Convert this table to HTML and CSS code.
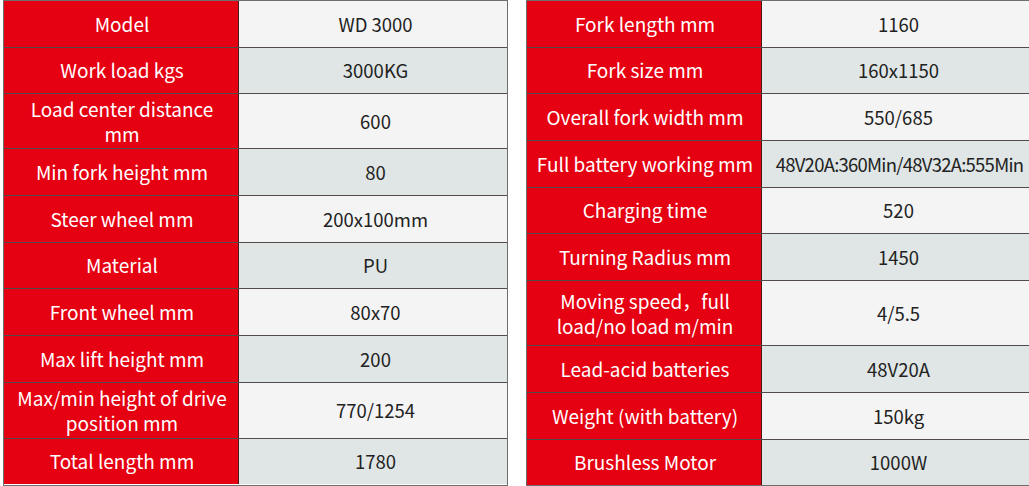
FILE: index.html
```html
<!DOCTYPE html>
<html lang="en">
<head>
<meta charset="utf-8">
<title>WD 3000 Specifications</title>
<link rel="stylesheet" href="styles.css">
</head>
<body>
<div class="page">
  <div class="spec">
    <div class="row"><div class="key">Model</div><div class="val">WD 3000</div></div>
    <div class="row alt"><div class="key">Work load kgs</div><div class="val">3000KG</div></div>
    <div class="row tall"><div class="key">Load center distance<br>mm</div><div class="val">600</div></div>
    <div class="row alt"><div class="key">Min fork height mm</div><div class="val">80</div></div>
    <div class="row"><div class="key">Steer wheel mm</div><div class="val">200x100mm</div></div>
    <div class="row alt"><div class="key">Material</div><div class="val">PU</div></div>
    <div class="row"><div class="key">Front wheel mm</div><div class="val">80x70</div></div>
    <div class="row alt"><div class="key">Max lift height mm</div><div class="val">200</div></div>
    <div class="row tall2"><div class="key">Max/min height of drive<br>position mm</div><div class="val">770/1254</div></div>
    <div class="row alt last"><div class="key">Total length mm</div><div class="val">1780</div></div>
  </div>
  <div class="spec">
    <div class="row"><div class="key">Fork length mm</div><div class="val">1160</div></div>
    <div class="row alt"><div class="key">Fork size mm</div><div class="val">160x1150</div></div>
    <div class="row"><div class="key">Overall fork width mm</div><div class="val">550/685</div></div>
    <div class="row alt"><div class="key">Full battery working mm</div><div class="val fit">48V20A:360Min/48V32A:555Min</div></div>
    <div class="row"><div class="key">Charging time</div><div class="val">520</div></div>
    <div class="row alt"><div class="key">Turning Radius mm</div><div class="val">1450</div></div>
    <div class="row xtall"><div class="key">Moving speed，full<br>load/no load m/min</div><div class="val">4/5.5</div></div>
    <div class="row alt"><div class="key">Lead-acid batteries</div><div class="val">48V20A</div></div>
    <div class="row"><div class="key">Weight (with battery)</div><div class="val">150kg</div></div>
    <div class="row alt last"><div class="key">Brushless Motor</div><div class="val">1000W</div></div>
  </div>
</div>
</body>
</html>
```
FILE: styles.css
```css
html, body {
  margin: 0;
  padding: 0;
  background: #ffffff;
  overflow: hidden;
}
body {
  font-family: "Noto Sans CJK SC", "Noto Sans", sans-serif;
}
.page {
  display: flex;
  gap: 18px;
  padding: 0 0 0 3px;
  width: 1100px;
}
.spec {
  width: 505px;
  flex: none;
  display: flex;
  flex-direction: column;
  border: 1.5px solid #6e6e6e;
  box-sizing: border-box;
}
.row {
  display: grid;
  grid-template-columns: 235px 1fr;
  height: 46.67px;
  border-bottom: 1.5px solid rgba(40, 30, 30, 0.8);
  box-sizing: border-box;
}
.row.last { border-bottom: none; height: 45px; }
.row.tall { height: 55px; }
.row.tall2 { height: 56.3px; }
.row.xtall { height: 65.3px; }
.key {
  background: #e50012;
  color: #ffffff;
  font-size: 19px;
  line-height: 25px;
  display: flex;
  align-items: center;
  justify-content: center;
  text-align: center;
  border-right: 1.5px solid #4a1a1a;
  white-space: nowrap;
  padding: 0 0 1px 2px;
}
.val {
  background: #f4f4f4;
  color: #222222;
  font-size: 18.5px;
  display: flex;
  align-items: center;
  justify-content: center;
  text-align: center;
  white-space: nowrap;
  padding-left: 5px;
}
.val.fit {
  letter-spacing: -0.75px;
  padding-left: 7px;
}
.row.alt .val {
  background: #dfe6e5;
}
```
